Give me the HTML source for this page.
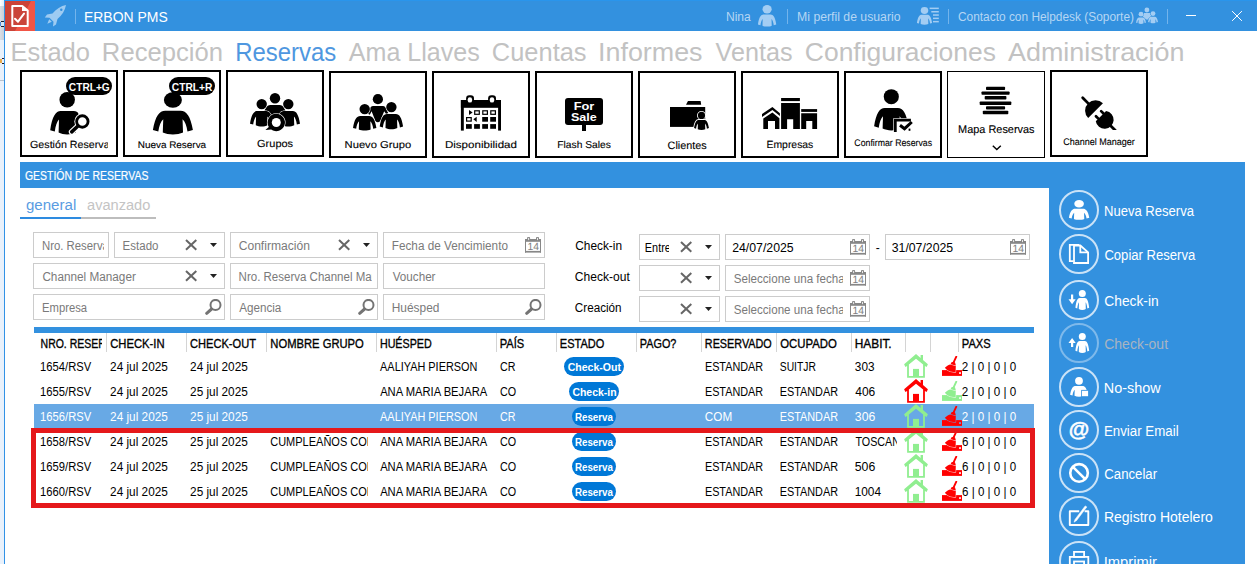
<!DOCTYPE html>
<html lang="es"><head><meta charset="utf-8"><title>ERBON PMS</title>
<style>
html,body{margin:0;padding:0;background:#fff;}
body{width:1257px;height:564px;overflow:hidden;position:relative;font-family:"Liberation Sans", sans-serif;}
#app{position:absolute;left:0;top:0;width:1257px;height:564px;overflow:hidden;background:#fff;}
.a{position:absolute;box-sizing:border-box;display:block;}
.t{position:absolute;white-space:nowrap;display:block;transform-origin:0 0;}
.c{overflow:hidden;}
</style></head><body><div id="app">
<div class="a" style="left:0px;top:0px;width:4px;height:564px;background:#e9f1fb;"></div>
<div class="a" style="left:0px;top:0px;width:4px;height:6px;background:linear-gradient(90deg,#fff,#e3eefb);"></div>
<div class="a" style="left:0px;top:6px;width:4px;height:34px;background:linear-gradient(90deg,#d9dee5,#c6cfda);"></div>
<div class="a" style="left:0.5px;top:21px;width:3.5px;height:1.2px;background:#1c1c2a;"></div>
<div class="a" style="left:0.5px;top:26px;width:3.5px;height:1.2px;background:#1c1c2a;"></div>
<div class="a" style="left:0px;top:22.2px;width:1.2px;height:3.8px;background:#4a86d8;"></div>
<div class="a" style="left:1.2px;top:22.2px;width:2.8px;height:3.8px;background:#d7e6f3;"></div>
<div class="a" style="left:1.5px;top:58px;width:2.5px;height:1.1px;background:#2a1c30;"></div>
<div class="a" style="left:0.3px;top:59px;width:1.3px;height:4px;background:#e8a94a;"></div>
<div class="a" style="left:1.6px;top:63px;width:2.4px;height:1.1px;background:#15151f;"></div>
<div class="a" style="left:0px;top:80px;width:4px;height:1px;background:#b7c1cd;"></div>
<div class="a" style="left:4px;top:0px;width:1px;height:564px;background:#3192e6;"></div>
<div class="a" style="left:5px;top:0px;width:1252px;height:31px;background:#3391df;"></div>
<div class="a" style="left:4px;top:0px;width:1253px;height:1px;background:#2a95ec;"></div>
<svg class="a" style="left:5px;top:1px;" width="30" height="30" viewBox="0 0 30 30"><rect width="30" height="30" fill="#f15546"/><path d="M0 0H26L10 30H0Z" fill="#cc4338"/>
<path d="M7.3 5H17.3L22.7 9.6V25H7.3Z" fill="#ca4439" stroke="#fff" stroke-width="2" stroke-linejoin="round"/>
<path d="M17 5V10H23Z" fill="#fff"/>
<path d="M10 17.7L13 20.7L19 12.6" fill="none" stroke="#fff" stroke-width="2" stroke-linecap="round" stroke-linejoin="round"/></svg>
<svg class="a" style="left:44px;top:4px;" width="23" height="24" viewBox="0 0 23 24"><g fill="#9ecbf2"><path d="M22 1C17 2 12 5 8.5 9.5L3 10.5L0.8 13.5L5.5 13.8L9.5 17.8L9 22.5L12 20.5L13.5 15C18 11.5 21 6.5 22 1Z"/><path d="M5.2 15.2L7.8 17.8L3.3 19.8Z"/></g><circle cx="17.3" cy="5.8" r="1.2" fill="#3391df"/></svg>
<div class="a" style="left:75px;top:9px;width:1px;height:15px;background:#73b4ec;"></div>
<span class="t" style="left:83px;top:10px;font-size:14.6px;line-height:15px;transform:translateX(0.96px) scaleX(0.9561);color:#fff;">ERBON PMS</span>
<span class="t" style="left:725px;top:11px;font-size:12px;line-height:12px;transform:translateX(0.92px) scaleX(1.0049);color:#b5d6f4;">Nina</span>
<div class="a" style="left:787px;top:9px;width:1px;height:15px;background:#73b4ec;"></div>
<span class="t" style="left:797px;top:11px;font-size:12px;line-height:12px;transform:translateX(0.10px) scaleX(1.0197);color:#b5d6f4;">Mi perfil de usuario</span>
<div class="a" style="left:948px;top:9px;width:1px;height:15px;background:#73b4ec;"></div>
<span class="t" style="left:957px;top:11px;font-size:12px;line-height:12px;transform:translateX(0.92px) scaleX(0.9922);color:#b5d6f4;">Contacto con Helpdesk (Soporte)</span>
<div class="a" style="left:1167px;top:9px;width:1px;height:15px;background:#73b4ec;"></div>
<svg class="a" style="left:756px;top:4px" width="22" height="24" viewBox="756 4 22 24"><g fill="#a3cdf3"><ellipse cx="767.10" cy="9.20" rx="4.60" ry="4.20"/><path d="M763.60 14.60L770.60 14.60C773.29 14.60 775.17 17.33 776.25 24.42L773.77 25.13C773.40 22.19 772.64 20.17 771.51 18.95L771.73 25.64C769.25 26.90 764.95 26.90 762.47 25.64L762.69 18.95C761.56 20.17 760.80 22.19 760.43 25.13L757.95 24.42C759.03 17.33 760.91 14.60 763.60 14.60Z"/></g></svg>
<svg class="a" style="left:915px;top:5px" width="26" height="22" viewBox="915 5 26 22"><g fill="#a3cdf3"><ellipse cx="924.50" cy="10.45" rx="3.75" ry="3.45"/><path d="M921.59 14.70L927.41 14.70C929.64 14.70 931.21 16.99 932.10 22.91L930.04 23.50C929.73 21.05 929.10 19.36 928.17 18.34L928.34 23.93C926.29 24.98 922.71 24.98 920.66 23.93L920.83 18.34C919.90 19.36 919.27 21.05 918.96 23.50L916.90 22.91C917.79 16.99 919.36 14.70 921.59 14.70Z"/><rect x="929.6" y="7.6" width="9.2" height="1.5"/><rect x="931.3" y="11" width="7.5" height="1.5"/><rect x="933" y="14.3" width="5.8" height="1.5"/><rect x="933" y="17.6" width="5.8" height="1.5"/><rect x="933" y="20.9" width="5.8" height="1.5"/></g></svg>
<svg class="a" style="left:1134px;top:6px" width="26" height="20" viewBox="1134 6 26 20"><g fill="#a3cdf3"><circle cx="1146.9" cy="10" r="2.4"/><path d="M1144 13H1149.8L1151.5 16L1147.9 19.6H1145.9L1142.3 16Z"/></g><g fill="#a3cdf3" stroke="#3391df" stroke-width="0.9" paint-order="stroke"><ellipse cx="1141.00" cy="14.20" rx="2.40" ry="2.40"/><path d="M1139.11 17.40L1142.89 17.40C1144.35 17.40 1145.37 18.88 1145.95 22.71L1144.61 23.10C1144.41 21.51 1144.00 20.41 1143.39 19.76L1143.50 23.37C1142.16 24.05 1139.84 24.05 1138.50 23.37L1138.61 19.76C1138.00 20.41 1137.59 21.51 1137.39 23.10L1136.05 22.71C1136.63 18.88 1137.65 17.40 1139.11 17.40Z"/><ellipse cx="1153.00" cy="13.60" rx="2.40" ry="2.40"/><path d="M1151.11 16.80L1154.89 16.80C1156.35 16.80 1157.37 18.28 1157.95 22.11L1156.61 22.50C1156.41 20.91 1156.00 19.81 1155.39 19.16L1155.50 22.77C1154.16 23.45 1151.84 23.45 1150.50 22.77L1150.61 19.16C1150.00 19.81 1149.59 20.91 1149.39 22.50L1148.05 22.11C1148.63 18.28 1149.65 16.80 1151.11 16.80Z"/></g></svg>
<div class="a" style="left:1186px;top:15px;width:10px;height:1px;background:#fff;"></div>
<svg class="a" style="left:1231px;top:10px;" width="12" height="12" viewBox="0 0 12 12"><path d="M1.1 1.1L10.9 10.9M10.9 1.1L1.1 10.9" stroke="#fff" stroke-width="1" fill="none"/></svg>
<span class="t" style="left:10px;top:39px;font-size:25.5px;line-height:26px;transform:translateX(0.58px);color:#c2c2c2;">Estado</span>
<span class="t" style="left:101px;top:39px;font-size:25.5px;line-height:26px;transform:translateX(0.85px) scaleX(1.0062);color:#c2c2c2;">Recepción</span>
<span class="t" style="left:235px;top:39px;font-size:25.5px;line-height:26px;transform:translateX(0.26px) scaleX(0.9379);color:#4f97e0;">Reservas</span>
<span class="t" style="left:348px;top:39px;font-size:25.5px;line-height:26px;transform:translateX(0.77px) scaleX(0.9834);color:#c2c2c2;">Ama Llaves</span>
<span class="t" style="left:491px;top:39px;font-size:25.5px;line-height:26px;transform:translateX(0.84px) scaleX(0.9974);color:#c2c2c2;">Cuentas</span>
<span class="t" style="left:598px;top:39px;font-size:25.5px;line-height:26px;transform:translateX(0.01px) scaleX(1.0539);color:#c2c2c2;">Informes</span>
<span class="t" style="left:715px;top:39px;font-size:25.5px;line-height:26px;transform:translateX(0.58px) scaleX(0.9867);color:#c2c2c2;">Ventas</span>
<span class="t" style="left:804px;top:39px;font-size:25.5px;line-height:26px;transform:translateX(0.84px) scaleX(1.0370);color:#c2c2c2;">Configuraciones</span>
<span class="t" style="left:1007px;top:39px;font-size:25.5px;line-height:26px;transform:translateX(0.99px) scaleX(1.0552);color:#c2c2c2;">Administración</span>
<div class="a" style="left:20px;top:70px;width:98px;height:87px;background:#fff;border:2px solid #000;"></div>
<div class="a" style="left:123px;top:70px;width:98px;height:87px;background:#fff;border:2px solid #000;"></div>
<div class="a" style="left:226px;top:70px;width:98px;height:87px;background:#fff;border:2px solid #000;"></div>
<div class="a" style="left:329px;top:71px;width:98px;height:87px;background:#fff;border:2px solid #000;"></div>
<div class="a" style="left:432px;top:71px;width:98px;height:87px;background:#fff;border:2px solid #000;"></div>
<div class="a" style="left:535px;top:71px;width:98px;height:87px;background:#fff;border:2px solid #000;"></div>
<div class="a" style="left:638px;top:71px;width:98px;height:87px;background:#fff;border:2px solid #000;"></div>
<div class="a" style="left:741px;top:71px;width:98px;height:87px;background:#fff;border:2px solid #000;"></div>
<div class="a" style="left:844px;top:71px;width:98px;height:87px;background:#fff;border:2px solid #000;"></div>
<div class="a" style="left:947px;top:71px;width:98px;height:87px;background:#fff;border:1px solid #000;"></div>
<div class="a" style="left:1050px;top:70px;width:98px;height:87px;background:#fff;border:2px solid #000;"></div>
<svg class="a" style="left:45px;top:88px" width="50" height="50" viewBox="45 88 50 50"><g fill="#000"><ellipse cx="67.20" cy="99.85" rx="7.75" ry="7.75"/><path d="M60.70 111.00L73.70 111.00C78.70 111.00 82.20 116.33 84.20 130.16L79.60 131.54C78.90 125.81 77.50 121.86 75.40 119.49L75.80 132.53C71.20 135.00 63.20 135.00 58.60 132.53L59.00 119.49C56.90 121.86 55.50 125.81 54.80 131.54L50.20 130.16C52.20 116.33 55.70 111.00 60.70 111.00Z"/></g><rect x="78.4" y="110" width="8" height="26" fill="#fff"/><path d="M78.2 125.8L71.7 131.9" stroke="#fff" stroke-width="5.8" stroke-linecap="round" fill="none"/><circle cx="82.35" cy="121.5" r="8" fill="#fff"/><path d="M78.2 125.8L71.7 131.9" stroke="#000" stroke-width="3.5" stroke-linecap="round" fill="none"/><circle cx="82.35" cy="121.5" r="5.72" fill="#fff" stroke="#000" stroke-width="2.85"/></svg>
<div class="a" style="left:66px;top:77px;width:46px;height:18px;background:#000;border-radius:9px;"></div>
<span class="t" style="left:68px;top:82px;font-size:10.5px;line-height:11px;font-weight:700;transform:translateX(0.86px) scaleX(0.9667);color:#fff;">CTRL+G</span>
<svg class="a" style="left:148px;top:88px" width="50" height="50" viewBox="148 88 50 50"><g fill="#000"><ellipse cx="172.90" cy="100.05" rx="9.00" ry="7.75"/><path d="M165.25 110.70L180.55 110.70C186.43 110.70 190.55 116.10 192.90 130.10L187.49 131.50C186.66 125.70 185.02 121.70 182.55 119.30L183.02 132.50C177.61 135.00 168.19 135.00 162.78 132.50L163.25 119.30C160.78 121.70 159.14 125.70 158.31 131.50L152.90 130.10C155.25 116.10 159.37 110.70 165.25 110.70Z"/></g></svg>
<div class="a" style="left:169px;top:77px;width:46px;height:18px;background:#000;border-radius:9px;"></div>
<span class="t" style="left:171px;top:82px;font-size:10.5px;line-height:11px;font-weight:700;transform:translateX(0.84px) scaleX(0.9744);color:#fff;">CTRL+R</span>
<svg class="a" style="left:245px;top:90px" width="60" height="45" viewBox="245 90 60 45"><g fill="#000"><ellipse cx="275.00" cy="98.20" rx="5.20" ry="5.20"/><path d="M270.32 105.10L279.68 105.10C283.29 105.10 285.81 108.91 287.25 118.78L283.94 119.77C283.43 115.68 282.42 112.86 280.91 111.17L281.20 120.48C277.88 122.24 272.12 122.24 268.80 120.48L269.09 111.17C267.58 112.86 266.57 115.68 266.06 119.77L262.75 118.78C264.19 108.91 266.71 105.10 270.32 105.10Z"/></g><g fill="#000" stroke="#fff" stroke-width="1.2" paint-order="stroke"><ellipse cx="261.70" cy="104.10" rx="5.20" ry="5.20"/><path d="M257.23 111.00L266.17 111.00C269.61 111.00 272.02 114.52 273.40 123.64L270.23 124.55C269.75 120.77 268.79 118.17 267.34 116.60L267.62 125.20C264.45 126.83 258.95 126.83 255.78 125.20L256.06 116.60C254.61 118.17 253.65 120.77 253.17 124.55L250.00 123.64C251.38 114.52 253.79 111.00 257.23 111.00Z"/><ellipse cx="288.30" cy="104.10" rx="5.20" ry="5.20"/><path d="M283.83 111.00L292.77 111.00C296.21 111.00 298.62 114.52 300.00 123.64L296.83 124.55C296.35 120.77 295.39 118.17 293.94 116.60L294.22 125.20C291.05 126.83 285.55 126.83 282.38 125.20L282.66 116.60C281.21 118.17 280.25 120.77 279.77 124.55L276.60 123.64C277.98 114.52 280.39 111.00 283.83 111.00Z"/><path d="M276.3 113.8A8.7 8.7 0 1 1 271.2 129.6L265.4 129.9L268.8 126.9A8.7 8.7 0 0 1 276.3 113.8Z"/></g><circle cx="276.3" cy="122.5" r="4.5" fill="#fff"/></svg>
<svg class="a" style="left:348px;top:90px" width="60" height="45" viewBox="348 90 60 45"><g fill="#000"><circle cx="377.9" cy="99.2" r="5.1"/><path d="M373 106.1H383C384.6 106.1 385.4 107 386 108.5L388.3 113.2L386.3 114.3L384.2 111.2L380.2 121C378.8 122.6 376.8 122.6 375.4 121L371.6 111.2L369.8 114.8L367.9 113.8L370 108.5C370.6 107 371.4 106.1 373 106.1Z"/></g><g fill="#000" stroke="#fff" stroke-width="1.2" paint-order="stroke"><ellipse cx="364.70" cy="109.10" rx="5.20" ry="5.20"/><path d="M360.23 116.00L369.17 116.00C372.61 116.00 375.02 119.32 376.40 127.91L373.23 128.77C372.75 125.21 371.79 122.76 370.34 121.28L370.62 129.39C367.45 130.92 361.95 130.92 358.78 129.39L359.06 121.28C357.61 122.76 356.65 125.21 356.17 128.77L353.00 127.91C354.38 119.32 356.79 116.00 360.23 116.00Z"/><ellipse cx="391.40" cy="107.10" rx="5.20" ry="5.20"/><path d="M386.93 114.00L395.87 114.00C399.31 114.00 401.72 117.50 403.10 126.56L399.93 127.46C399.45 123.71 398.49 121.12 397.04 119.57L397.32 128.11C394.15 129.73 388.65 129.73 385.48 128.11L385.76 119.57C384.31 121.12 383.35 123.71 382.87 127.46L379.70 126.56C381.08 117.50 383.49 114.00 386.93 114.00Z"/></g></svg>
<svg class="a" style="left:456px;top:93px" width="50" height="40" viewBox="456 93 50 40"><g fill="#000"><rect x="460.9" y="100" width="40.1" height="7.8"/><rect x="460.9" y="100" width="2.9" height="30.6"/><rect x="498.1" y="100" width="2.9" height="30.6"/><rect x="466.1" y="95.2" width="7.9" height="8.4" rx="3.2"/><rect x="488.1" y="95.2" width="7.9" height="8.4" rx="3.2"/><path d="M469 110.0L472.6 112.55L469 115.10000000000001Z"/><rect x="474.70000000000005" y="110.8" width="4.6" height="3.5" fill="#fff" stroke="#000" stroke-width="1.2"/><rect x="482.8" y="110.8" width="4.6" height="3.5" fill="#fff" stroke="#000" stroke-width="1.2"/><rect x="490.8" y="110.8" width="4.6" height="3.5" fill="#fff" stroke="#000" stroke-width="1.2"/><rect x="466.6" y="117.6" width="4.6" height="3.5" fill="#fff" stroke="#000" stroke-width="1.2"/><path d="M476.70000000000005 116.8L473.3 119.35L476.70000000000005 121.9Z"/><rect x="482.2" y="117.0" width="5.8" height="4.7"/><rect x="490.2" y="117.0" width="5.8" height="4.7"/><rect x="466" y="124.1" width="5.8" height="4.7"/><rect x="474.1" y="124.1" width="5.8" height="4.7"/><rect x="482.2" y="124.1" width="5.8" height="4.7"/><rect x="490.2" y="124.1" width="5.8" height="4.7"/></g><rect x="467.7" y="97.2" width="4.4" height="5.4" rx="2.2" fill="#fff"/><rect x="489.8" y="97.2" width="4.4" height="5.4" rx="2.2" fill="#fff"/></svg>
<div class="a" style="left:565px;top:98px;width:38px;height:26.7px;background:#000;border-radius:3px;"></div>
<div class="a" style="left:582.3px;top:124px;width:3.6px;height:6.8px;background:#000;"></div>
<span class="t" style="left:573px;top:100px;font-size:11.5px;line-height:12px;font-weight:700;transform:translateX(0.64px) scaleX(1.1110);color:#fff;">For</span>
<span class="t" style="left:570px;top:111px;font-size:11.5px;line-height:12px;font-weight:700;transform:translateX(0.92px) scaleX(1.0890);color:#fff;">Sale</span>
<svg class="a" style="left:665px;top:96px" width="50" height="38" viewBox="665 96 50 38"><g fill="#000"><rect x="670" y="107" width="35.2" height="19.9"/><path d="M688 100.9H700.6L701.2 104.8H686Z"/></g><g fill="#000" stroke="#fff" stroke-width="1.8" paint-order="stroke"><circle cx="701.5" cy="115.4" r="3.6"/><path d="M698.65 119.90L704.35 119.90C706.54 119.90 708.07 122.19 708.95 128.11L706.93 128.70C706.63 126.25 706.01 124.56 705.09 123.54L705.27 129.13C703.25 130.18 699.75 130.18 697.73 129.13L697.91 123.54C696.99 124.56 696.37 126.25 696.07 128.70L694.05 128.11C694.93 122.19 696.46 119.90 698.65 119.90Z"/></g></svg>
<svg class="a" style="left:760px;top:96px" width="60" height="36" viewBox="760 96 60 36"><g fill="#000"><rect x="781.1" y="98" width="18.8" height="3.1"/><path d="M781.1 103H799.9V128.9H793.2V119.3H787.1V128.9H781.1Z"/><rect x="801.2" y="109.1" width="15.9" height="2.8"/><path d="M801.2 113.2H817.1V128.9H812.3V121H806.2V128.9H801.2Z"/><path d="M772.4 107.1L779.9 113.2V116L772.4 110L762 116.9V114.1Z"/><path d="M772.4 112.4L779.4 118.2V128.9H775V121H768V128.9H763.3V118.4Z"/></g></svg>
<svg class="a" style="left:870px;top:86px" width="46" height="46" viewBox="870 86 46 46"><g fill="#000"><ellipse cx="891.30" cy="96.70" rx="7.55" ry="7.55"/><path d="M884.72 108.00L897.88 108.00C902.94 108.00 906.48 113.11 908.50 126.35L903.85 127.68C903.14 122.19 901.72 118.41 899.60 116.14L900.00 128.62C895.35 130.99 887.25 130.99 882.60 128.62L883.00 116.14C880.88 118.41 879.46 122.19 878.75 127.68L874.10 126.35C876.12 113.11 879.66 108.00 884.72 108.00Z"/></g><rect x="893.3" y="118.2" width="18" height="14" fill="#fff"/><path d="M895.3 120.2H909.5M895.3 120.2V130.8" stroke="#000" stroke-width="2.8" fill="none" stroke-linecap="square"/><path d="M900 125.2L904.5 128.7L911.8 122" stroke="#000" stroke-width="3" fill="none"/><rect x="908.6" y="128.6" width="1.8" height="2.2" fill="#000"/></svg>
<svg class="a" style="left:976px;top:84px" width="40" height="34" viewBox="976 84 40 34"><rect x="986.0" y="86.70" width="19.1" height="3.4" rx="0.8" fill="#000"/><rect x="981.5" y="91.45" width="28.1" height="3.4" rx="0.8" fill="#000"/><rect x="984.7" y="96.05" width="21.7" height="3.4" rx="0.8" fill="#000"/><rect x="979.7" y="101.55" width="31.6" height="3.4" rx="0.8" fill="#000"/><rect x="986.0" y="106.15" width="19.1" height="3.4" rx="0.8" fill="#000"/><rect x="982.8" y="110.80" width="25.5" height="3.4" rx="0.8" fill="#000"/></svg>
<svg class="a" style="left:1078px;top:94px" width="42" height="35.7" viewBox="1078 94 42 35.7"><g transform="translate(1095.55 110.7) rotate(-45)" fill="#000"><path d="M-10.45 0H10.45A10.45 10.45 0 0 0 -10.45 0Z"/><rect x="-1.4" y="-19.6" width="2.8" height="11" rx="1.4"/><rect x="-5" y="2.9" width="2.7" height="6" rx="1.3"/><rect x="2.3" y="2.9" width="2.7" height="6" rx="1.3"/><path d="M-7.3 7.6H7.3A9 9 0 1 1 -7.3 7.6Z"/><rect x="-1.4" y="20" width="2.8" height="10"/></g></svg>
<div class="a c" style="left:28px;top:134px;width:79.90px;height:23px"><span class="t" style="left:2px;top:6px;font-size:10.4px;line-height:11px;transform:translateX(0.07px) scaleX(1.0273);text-rendering:geometricPrecision;-webkit-text-stroke:0.12px currentColor;color:#000;">Gestión Reservas</span></div>
<span class="t" style="left:137px;top:141px;font-size:9.6px;line-height:10px;transform:translateX(0.71px) scaleX(1.0350);text-rendering:geometricPrecision;-webkit-text-stroke:0.12px currentColor;color:#000;">Nueva Reserva</span>
<span class="t" style="left:257px;top:139px;font-size:10.3px;line-height:11px;transform:translateX(0.09px) scaleX(1.0654);text-rendering:geometricPrecision;-webkit-text-stroke:0.12px currentColor;color:#000;">Grupos</span>
<span class="t" style="left:344px;top:141px;font-size:10px;line-height:10px;transform:translateX(0.56px) scaleX(1.1209);text-rendering:geometricPrecision;-webkit-text-stroke:0.12px currentColor;color:#000;">Nuevo Grupo</span>
<span class="t" style="left:444px;top:141px;font-size:10px;line-height:10px;transform:translateX(0.90px) scaleX(1.1576);text-rendering:geometricPrecision;-webkit-text-stroke:0.12px currentColor;color:#000;">Disponibilidad</span>
<span class="t" style="left:557px;top:141px;font-size:10px;line-height:10px;transform:translateX(0.34px) scaleX(1.0243);text-rendering:geometricPrecision;-webkit-text-stroke:0.12px currentColor;color:#000;">Flash Sales</span>
<span class="t" style="left:667px;top:141px;font-size:10.8px;line-height:11px;transform:translateX(0.58px);text-rendering:geometricPrecision;-webkit-text-stroke:0.12px currentColor;color:#000;">Clientes</span>
<span class="t" style="left:766px;top:140px;font-size:10.4px;line-height:11px;transform:translateX(0.53px);text-rendering:geometricPrecision;-webkit-text-stroke:0.12px currentColor;color:#000;">Empresas</span>
<span class="t" style="left:854px;top:139px;font-size:9.6px;line-height:10px;transform:translateX(0.36px) scaleX(0.9104);text-rendering:geometricPrecision;-webkit-text-stroke:0.12px currentColor;color:#000;">Confirmar Reservas</span>
<span class="t" style="left:958px;top:124px;font-size:11.2px;line-height:12px;transform:translateX(0.11px) scaleX(0.9753);text-rendering:geometricPrecision;-webkit-text-stroke:0.12px currentColor;color:#000;">Mapa Reservas</span>
<span class="t" style="left:1063px;top:138px;font-size:9.6px;line-height:10px;transform:translateX(0.17px) scaleX(0.9397);text-rendering:geometricPrecision;-webkit-text-stroke:0.12px currentColor;color:#000;">Channel Manager</span>
<svg class="a" style="left:991px;top:144px;" width="12" height="8" viewBox="0 0 12 8"><path d="M1.8 1.8L5.8 5.6L9.8 1.8" stroke="#000" stroke-width="1.4" fill="none"/></svg>
<div class="a" style="left:20px;top:162px;width:1225px;height:402px;background:#3391df;"></div>
<div class="a" style="left:20px;top:188px;width:1029px;height:376px;background:#fff;"></div>
<span class="t" style="left:24px;top:170px;font-size:12px;line-height:12px;transform:translateX(0.99px) scaleX(0.8714);-webkit-text-stroke:0.2px currentColor;color:#fff;">GESTIÓN DE RESERVAS</span>
<span class="t" style="left:25px;top:197px;font-size:15.4px;line-height:16px;transform:translateX(0.98px) scaleX(0.9788);color:#5a9ce2;">general</span>
<span class="t" style="left:87px;top:197px;font-size:15.4px;line-height:16px;transform:translateX(0.08px) scaleX(0.9479);color:#c4c4c4;">avanzado</span>
<div class="a" style="left:20px;top:217px;width:61px;height:2px;background:#2e8be0;"></div>
<div class="a" style="left:81px;top:217px;width:75px;height:2px;background:#bdbdbd;"></div>
<div class="a" style="left:33px;top:232px;width:76px;height:26px;background:#fff;border:1px solid #cccccc;"></div>
<div class="a" style="left:114px;top:232px;width:111px;height:26px;background:#fff;border:1px solid #cccccc;"></div>
<div class="a" style="left:230px;top:232px;width:148px;height:26px;background:#fff;border:1px solid #cccccc;"></div>
<div class="a" style="left:383px;top:232px;width:162px;height:26px;background:#fff;border:1px solid #cccccc;"></div>
<div class="a" style="left:33px;top:263px;width:192px;height:26px;background:#fff;border:1px solid #cccccc;"></div>
<div class="a" style="left:230px;top:263px;width:148px;height:26px;background:#fff;border:1px solid #cccccc;"></div>
<div class="a" style="left:383px;top:263px;width:162px;height:26px;background:#fff;border:1px solid #cccccc;"></div>
<div class="a" style="left:33px;top:294px;width:192px;height:26px;background:#fff;border:1px solid #cccccc;"></div>
<div class="a" style="left:230px;top:294px;width:148px;height:26px;background:#fff;border:1px solid #cccccc;"></div>
<div class="a" style="left:383px;top:294px;width:162px;height:26px;background:#fff;border:1px solid #cccccc;"></div>
<div class="a c" style="left:39px;top:234px;width:64.90px;height:24px"><span class="t" style="left:2px;top:6px;font-size:12px;line-height:12px;transform:translateX(0.99px) scaleX(0.9464);color:#7a7a7a;">Nro. Reserva</span></div>
<span class="t" style="left:122px;top:240px;font-size:12px;line-height:12px;transform:translateX(0.62px) scaleX(0.9584);color:#7a7a7a;">Estado</span>
<svg class="a" style="left:184.9px;top:239.4px;" width="12" height="11.5" viewBox="0 0 12 11.5"><path d="M1 1L11.3 10.8M11.3 1L1 10.8" stroke="#666" stroke-width="2" fill="none"/></svg>
<svg class="a" style="left:210px;top:243px;" width="7" height="4" viewBox="0 0 7 4"><path d="M0 0H7L3.5 4Z" fill="#222"/></svg>
<span class="t" style="left:238px;top:240px;font-size:12px;line-height:12px;transform:translateX(0.68px) scaleX(1.0078);color:#7a7a7a;">Confirmación</span>
<svg class="a" style="left:338.3px;top:239.4px;" width="12" height="11.5" viewBox="0 0 12 11.5"><path d="M1 1L11.3 10.8M11.3 1L1 10.8" stroke="#666" stroke-width="2" fill="none"/></svg>
<svg class="a" style="left:363px;top:243px;" width="7" height="4" viewBox="0 0 7 4"><path d="M0 0H7L3.5 4Z" fill="#222"/></svg>
<span class="t" style="left:391px;top:240px;font-size:12px;line-height:12px;transform:translateX(0.81px) scaleX(0.9778);color:#7a7a7a;">Fecha de Vencimiento</span>
<svg class="a" style="left:525px;top:237px;" width="16" height="16" viewBox="0 0 16 16"><g fill="#878787"><rect x="0" y="2" width="16" height="2.8"/><rect x="0" y="2" width="1" height="13.6"/><rect x="15" y="2" width="1" height="13.6"/><rect x="0" y="13.9" width="16" height="1.7"/>
<rect x="2.1" y="0" width="3" height="3.6" rx="0.9"/><rect x="11" y="0" width="3" height="3.6" rx="0.9"/></g><rect x="3.1" y="0.9" width="1" height="2.2" fill="#e9e9e9"/><rect x="12" y="0.9" width="1" height="2.2" fill="#e9e9e9"/>
<text x="8.3" y="13.3" font-family="Liberation Sans, sans-serif" font-size="10.4" text-anchor="middle" fill="#7f7f7f" text-rendering="geometricPrecision">14</text></svg>
<span class="t" style="left:42px;top:271px;font-size:12px;line-height:12px;transform:translateX(0.38px) scaleX(0.9797);color:#7a7a7a;">Channel Manager</span>
<svg class="a" style="left:184.9px;top:270.4px;" width="12" height="11.5" viewBox="0 0 12 11.5"><path d="M1 1L11.3 10.8M11.3 1L1 10.8" stroke="#666" stroke-width="2" fill="none"/></svg>
<svg class="a" style="left:210px;top:274px;" width="7" height="4" viewBox="0 0 7 4"><path d="M0 0H7L3.5 4Z" fill="#222"/></svg>
<div class="a c" style="left:236px;top:265px;width:136.00px;height:24px"><span class="t" style="left:2px;top:6px;font-size:12px;line-height:12px;transform:translateX(0.60px) scaleX(0.9589);color:#7a7a7a;">Nro. Reserva Channel Manager</span></div>
<span class="t" style="left:392px;top:271px;font-size:12px;line-height:12px;transform:translateX(0.71px) scaleX(0.9718);color:#7a7a7a;">Voucher</span>
<span class="t" style="left:42px;top:302px;font-size:12px;line-height:12px;transform:translateX(0.06px) scaleX(0.9381);color:#7a7a7a;">Empresa</span>
<svg class="a" style="left:204.5px;top:299px;" width="17" height="16" viewBox="0 0 17 16"><circle cx="10.5" cy="5.9" r="5" fill="none" stroke="#747474" stroke-width="2"/><path d="M6.6 10L1.7 14.3" stroke="#747474" stroke-width="3" stroke-linecap="round"/></svg>
<span class="t" style="left:239px;top:302px;font-size:12px;line-height:12px;transform:translateX(0.25px) scaleX(0.9704);color:#7a7a7a;">Agencia</span>
<svg class="a" style="left:357.5px;top:299px;" width="17" height="16" viewBox="0 0 17 16"><circle cx="10.5" cy="5.9" r="5" fill="none" stroke="#747474" stroke-width="2"/><path d="M6.6 10L1.7 14.3" stroke="#747474" stroke-width="3" stroke-linecap="round"/></svg>
<span class="t" style="left:391px;top:302px;font-size:12px;line-height:12px;transform:translateX(0.76px) scaleX(0.9914);color:#7a7a7a;">Huésped</span>
<svg class="a" style="left:524.5px;top:299px;" width="17" height="16" viewBox="0 0 17 16"><circle cx="10.5" cy="5.9" r="5" fill="none" stroke="#747474" stroke-width="2"/><path d="M6.6 10L1.7 14.3" stroke="#747474" stroke-width="3" stroke-linecap="round"/></svg>
<span class="t" style="left:575px;top:240px;font-size:12px;line-height:12px;transform:translateX(0.23px) scaleX(0.9891);color:#000;">Check-in</span>
<span class="t" style="left:574px;top:271px;font-size:12px;line-height:12px;transform:translateX(0.84px) scaleX(1.0048);color:#000;">Check-out</span>
<span class="t" style="left:574px;top:302px;font-size:12px;line-height:12px;transform:translateX(0.85px) scaleX(0.9722);color:#000;">Creación</span>
<div class="a" style="left:639px;top:234px;width:81px;height:26px;background:#fff;border:1px solid #cccccc;"></div>
<svg class="a" style="left:679.8px;top:241.4px;" width="12" height="11.5" viewBox="0 0 12 11.5"><path d="M1 1L11.3 10.8M11.3 1L1 10.8" stroke="#666" stroke-width="2" fill="none"/></svg>
<svg class="a" style="left:705px;top:245px;" width="7" height="4" viewBox="0 0 7 4"><path d="M0 0H7L3.5 4Z" fill="#222"/></svg>
<div class="a" style="left:725px;top:234px;width:145px;height:26px;background:#fff;border:1px solid #cccccc;"></div>
<svg class="a" style="left:850px;top:239px;" width="16" height="16" viewBox="0 0 16 16"><g fill="#878787"><rect x="0" y="2" width="16" height="2.8"/><rect x="0" y="2" width="1" height="13.6"/><rect x="15" y="2" width="1" height="13.6"/><rect x="0" y="13.9" width="16" height="1.7"/>
<rect x="2.1" y="0" width="3" height="3.6" rx="0.9"/><rect x="11" y="0" width="3" height="3.6" rx="0.9"/></g><rect x="3.1" y="0.9" width="1" height="2.2" fill="#e9e9e9"/><rect x="12" y="0.9" width="1" height="2.2" fill="#e9e9e9"/>
<text x="8.3" y="13.3" font-family="Liberation Sans, sans-serif" font-size="10.4" text-anchor="middle" fill="#7f7f7f" text-rendering="geometricPrecision">14</text></svg>
<div class="a" style="left:639px;top:265px;width:81px;height:26px;background:#fff;border:1px solid #cccccc;"></div>
<svg class="a" style="left:679.8px;top:272.4px;" width="12" height="11.5" viewBox="0 0 12 11.5"><path d="M1 1L11.3 10.8M11.3 1L1 10.8" stroke="#666" stroke-width="2" fill="none"/></svg>
<svg class="a" style="left:705px;top:276px;" width="7" height="4" viewBox="0 0 7 4"><path d="M0 0H7L3.5 4Z" fill="#222"/></svg>
<div class="a" style="left:725px;top:265px;width:145px;height:26px;background:#fff;border:1px solid #cccccc;"></div>
<svg class="a" style="left:850px;top:270px;" width="16" height="16" viewBox="0 0 16 16"><g fill="#878787"><rect x="0" y="2" width="16" height="2.8"/><rect x="0" y="2" width="1" height="13.6"/><rect x="15" y="2" width="1" height="13.6"/><rect x="0" y="13.9" width="16" height="1.7"/>
<rect x="2.1" y="0" width="3" height="3.6" rx="0.9"/><rect x="11" y="0" width="3" height="3.6" rx="0.9"/></g><rect x="3.1" y="0.9" width="1" height="2.2" fill="#e9e9e9"/><rect x="12" y="0.9" width="1" height="2.2" fill="#e9e9e9"/>
<text x="8.3" y="13.3" font-family="Liberation Sans, sans-serif" font-size="10.4" text-anchor="middle" fill="#7f7f7f" text-rendering="geometricPrecision">14</text></svg>
<div class="a" style="left:639px;top:296px;width:81px;height:26px;background:#fff;border:1px solid #cccccc;"></div>
<svg class="a" style="left:679.8px;top:303.4px;" width="12" height="11.5" viewBox="0 0 12 11.5"><path d="M1 1L11.3 10.8M11.3 1L1 10.8" stroke="#666" stroke-width="2" fill="none"/></svg>
<svg class="a" style="left:705px;top:307px;" width="7" height="4" viewBox="0 0 7 4"><path d="M0 0H7L3.5 4Z" fill="#222"/></svg>
<div class="a" style="left:725px;top:296px;width:145px;height:26px;background:#fff;border:1px solid #cccccc;"></div>
<svg class="a" style="left:850px;top:301px;" width="16" height="16" viewBox="0 0 16 16"><g fill="#878787"><rect x="0" y="2" width="16" height="2.8"/><rect x="0" y="2" width="1" height="13.6"/><rect x="15" y="2" width="1" height="13.6"/><rect x="0" y="13.9" width="16" height="1.7"/>
<rect x="2.1" y="0" width="3" height="3.6" rx="0.9"/><rect x="11" y="0" width="3" height="3.6" rx="0.9"/></g><rect x="3.1" y="0.9" width="1" height="2.2" fill="#e9e9e9"/><rect x="12" y="0.9" width="1" height="2.2" fill="#e9e9e9"/>
<text x="8.3" y="13.3" font-family="Liberation Sans, sans-serif" font-size="10.4" text-anchor="middle" fill="#7f7f7f" text-rendering="geometricPrecision">14</text></svg>
<div class="a" style="left:885px;top:234px;width:145px;height:26px;background:#fff;border:1px solid #cccccc;"></div>
<svg class="a" style="left:1010px;top:239px;" width="16" height="16" viewBox="0 0 16 16"><g fill="#878787"><rect x="0" y="2" width="16" height="2.8"/><rect x="0" y="2" width="1" height="13.6"/><rect x="15" y="2" width="1" height="13.6"/><rect x="0" y="13.9" width="16" height="1.7"/>
<rect x="2.1" y="0" width="3" height="3.6" rx="0.9"/><rect x="11" y="0" width="3" height="3.6" rx="0.9"/></g><rect x="3.1" y="0.9" width="1" height="2.2" fill="#e9e9e9"/><rect x="12" y="0.9" width="1" height="2.2" fill="#e9e9e9"/>
<text x="8.3" y="13.3" font-family="Liberation Sans, sans-serif" font-size="10.4" text-anchor="middle" fill="#7f7f7f" text-rendering="geometricPrecision">14</text></svg>
<div class="a c" style="left:642px;top:236px;width:27.40px;height:24px"><span class="t" style="left:2px;top:6px;font-size:12px;line-height:12px;transform:translateX(0.87px) scaleX(0.9060);color:#000;">Entre</span></div>
<span class="t" style="left:732px;top:242px;font-size:12px;line-height:12px;transform:translateX(0.18px) scaleX(1.0242);color:#000;">24/07/2025</span>
<span class="t" style="left:875px;top:242px;font-size:12px;line-height:12px;transform:translateX(0.65px);color:#000;">-</span>
<span class="t" style="left:891px;top:242px;font-size:12px;line-height:12px;transform:translateX(0.73px) scaleX(1.0227);color:#000;">31/07/2025</span>
<div class="a c" style="left:731px;top:267px;width:112.00px;height:24px"><span class="t" style="left:2px;top:6px;font-size:12px;line-height:12px;transform:translateX(0.78px) scaleX(0.9671);color:#7a7a7a;">Seleccione una fecha</span></div>
<div class="a c" style="left:731px;top:298px;width:112.00px;height:24px"><span class="t" style="left:2px;top:6px;font-size:12px;line-height:12px;transform:translateX(0.78px) scaleX(0.9671);color:#7a7a7a;">Seleccione una fecha</span></div>
<div class="a" style="left:34px;top:327px;width:1000px;height:6px;background:#3391df;"></div>
<div class="a" style="left:106px;top:333px;width:1px;height:19px;background:#d4d4d4;"></div>
<div class="a" style="left:186px;top:333px;width:1px;height:19px;background:#d4d4d4;"></div>
<div class="a" style="left:266px;top:333px;width:1px;height:19px;background:#d4d4d4;"></div>
<div class="a" style="left:376px;top:333px;width:1px;height:19px;background:#d4d4d4;"></div>
<div class="a" style="left:496px;top:333px;width:1px;height:19px;background:#d4d4d4;"></div>
<div class="a" style="left:556px;top:333px;width:1px;height:19px;background:#d4d4d4;"></div>
<div class="a" style="left:636px;top:333px;width:1px;height:19px;background:#d4d4d4;"></div>
<div class="a" style="left:701px;top:333px;width:1px;height:19px;background:#d4d4d4;"></div>
<div class="a" style="left:776px;top:333px;width:1px;height:19px;background:#d4d4d4;"></div>
<div class="a" style="left:851px;top:333px;width:1px;height:19px;background:#d4d4d4;"></div>
<div class="a" style="left:905px;top:333px;width:1px;height:19px;background:#d4d4d4;"></div>
<div class="a" style="left:930px;top:333px;width:1px;height:19px;background:#d4d4d4;"></div>
<div class="a" style="left:958px;top:333px;width:1px;height:19px;background:#d4d4d4;"></div>
<div class="a c" style="left:38px;top:332px;width:64.00px;height:24px"><span class="t" style="left:2px;top:6px;font-size:12px;line-height:12px;transform:translateX(0.55px) scaleX(0.8744);-webkit-text-stroke:0.32px currentColor;color:#000;">NRO. RESERVA</span></div>
<span class="t" style="left:110px;top:338px;font-size:12px;line-height:12px;transform:translateX(0.13px) scaleX(0.9384);-webkit-text-stroke:0.32px currentColor;color:#000;">CHECK-IN</span>
<span class="t" style="left:190px;top:338px;font-size:12px;line-height:12px;transform:translateX(0.10px) scaleX(0.9226);-webkit-text-stroke:0.32px currentColor;color:#000;">CHECK-OUT</span>
<span class="t" style="left:270px;top:338px;font-size:12px;line-height:12px;transform:translateX(0.30px) scaleX(0.9352);-webkit-text-stroke:0.32px currentColor;color:#000;">NOMBRE GRUPO</span>
<span class="t" style="left:379px;top:338px;font-size:12px;line-height:12px;transform:translateX(0.90px) scaleX(0.8927);-webkit-text-stroke:0.32px currentColor;color:#000;">HUÉSPED</span>
<span class="t" style="left:499px;top:338px;font-size:12px;line-height:12px;transform:translateX(0.79px) scaleX(0.9252);-webkit-text-stroke:0.32px currentColor;color:#000;">PAÍS</span>
<span class="t" style="left:559px;top:338px;font-size:12px;line-height:12px;transform:translateX(0.84px) scaleX(0.9173);-webkit-text-stroke:0.32px currentColor;color:#000;">ESTADO</span>
<span class="t" style="left:639px;top:338px;font-size:12px;line-height:12px;transform:translateX(0.87px) scaleX(0.9025);-webkit-text-stroke:0.32px currentColor;color:#000;">PAGO?</span>
<span class="t" style="left:704px;top:338px;font-size:12px;line-height:12px;transform:translateX(0.87px) scaleX(0.8999);-webkit-text-stroke:0.32px currentColor;color:#000;">RESERVADO</span>
<span class="t" style="left:780px;top:338px;font-size:12px;line-height:12px;transform:translateX(0.16px) scaleX(0.9473);-webkit-text-stroke:0.32px currentColor;color:#000;">OCUPADO</span>
<span class="t" style="left:854px;top:338px;font-size:12px;line-height:12px;transform:translateX(0.70px) scaleX(0.9901);-webkit-text-stroke:0.32px currentColor;color:#000;">HABIT.</span>
<span class="t" style="left:961px;top:338px;font-size:12px;line-height:12px;transform:translateX(0.82px) scaleX(0.9282);-webkit-text-stroke:0.32px currentColor;color:#000;">PAXS</span>
<div class="a" style="left:34px;top:404px;width:1000px;height:25px;background:#68a9e5;"></div>
<span class="t" style="left:40px;top:361px;font-size:12px;line-height:12px;transform:translateX(0.10px) scaleX(0.9337);color:#000;">1654/RSV</span>
<span class="t" style="left:110px;top:361px;font-size:12px;line-height:12px;transform:translateX(0.09px) scaleX(0.9836);color:#000;">24 jul 2025</span>
<span class="t" style="left:190px;top:361px;font-size:12px;line-height:12px;transform:translateX(0.07px) scaleX(0.9831);color:#000;">24 jul 2025</span>
<span class="t" style="left:380px;top:361px;font-size:12px;line-height:12px;transform:translateX(0.09px) scaleX(0.9083);color:#000;">AALIYAH PIERSON</span>
<span class="t" style="left:500px;top:361px;font-size:12px;line-height:12px;transform:translateX(0.02px) scaleX(0.8914);color:#000;">CR</span>
<div class="a" style="left:564px;top:357px;width:60px;height:19px;background:#0078d7;border-radius:10px;"></div>
<span class="t" style="left:567px;top:361px;font-size:11.5px;line-height:12px;font-weight:700;transform:translateX(0.63px) scaleX(0.9167);color:#fff;">Check-Out</span>
<span class="t" style="left:704px;top:361px;font-size:12px;line-height:12px;transform:translateX(0.89px) scaleX(0.9045);color:#000;">ESTANDAR</span>
<span class="t" style="left:779px;top:361px;font-size:12px;line-height:12px;transform:translateX(0.77px) scaleX(0.8591);color:#000;">SUITJR</span>
<span class="t" style="left:854px;top:361px;font-size:12px;line-height:12px;transform:translateX(0.84px) scaleX(0.9824);color:#000;">303</span>
<svg class="a" style="left:904px;top:354px;" width="24" height="24" viewBox="0 0 24 24"><g transform="translate(-904 -354)"><path fill-rule="evenodd" fill="#90ee90" d="M916 354.1L920.6 358V354.9H923V360.1L927.9 364.3L926.6 367L924.9 366.1V377.8H907.1V366.1L905.4 367L904.1 364.3ZM916 358.8L908.9 364.6V375.9H923.1V364.6Z"/><rect x="913" y="368.9" width="6" height="7.5" fill="#90ee90"/></g></svg>
<svg class="a" style="left:942px;top:356px;" width="21" height="21" viewBox="0 0 21 21"><g transform="translate(-942 -356)"><rect x="942" y="370.1" width="20" height="5.8" fill="#ff0000"/><rect x="959.1" y="372.2" width="1.8" height="1.7" fill="#fff"/>
<path d="M950 364.5L955.8 366.1L955.6 372.3L950.2 371.5C948 370.6 946.2 369.5 944.9 367.7C946.4 366.2 948.1 365.2 950 364.5Z" fill="#ff0000" stroke="#fff" stroke-width="0.9" paint-order="stroke" stroke-linejoin="round"/>
<path d="M950.5 364.2L951.7 362L955 362.2L955.9 365.5Z" fill="#ff0000"/><path d="M956.3 356.7L953.5 362.6" stroke="#ff0000" stroke-width="1.9" stroke-linecap="round" fill="none"/></g></svg>
<span class="t" style="left:961px;top:361px;font-size:12px;line-height:12px;transform:translateX(0.87px) scaleX(0.9673);color:#000;">2 | 0 | 0 | 0</span>
<span class="t" style="left:40px;top:386px;font-size:12px;line-height:12px;transform:translateX(0.10px) scaleX(0.9337);color:#000;">1655/RSV</span>
<span class="t" style="left:110px;top:386px;font-size:12px;line-height:12px;transform:translateX(0.09px) scaleX(0.9836);color:#000;">24 jul 2025</span>
<span class="t" style="left:190px;top:386px;font-size:12px;line-height:12px;transform:translateX(0.07px) scaleX(0.9831);color:#000;">25 jul 2025</span>
<span class="t" style="left:380px;top:386px;font-size:12px;line-height:12px;transform:translateX(0.13px) scaleX(0.9336);color:#000;">ANA MARIA BEJARA</span>
<span class="t" style="left:499px;top:386px;font-size:12px;line-height:12px;transform:translateX(0.99px) scaleX(0.8978);color:#000;">CO</span>
<div class="a" style="left:569px;top:382px;width:50.299999999999955px;height:19px;background:#0078d7;border-radius:10px;"></div>
<span class="t" style="left:572px;top:386px;font-size:11.5px;line-height:12px;font-weight:700;transform:translateX(0.38px) scaleX(0.9095);color:#fff;">Check-in</span>
<span class="t" style="left:704px;top:386px;font-size:12px;line-height:12px;transform:translateX(0.89px) scaleX(0.9045);color:#000;">ESTANDAR</span>
<span class="t" style="left:779px;top:386px;font-size:12px;line-height:12px;transform:translateX(0.63px) scaleX(0.9055);color:#000;">ESTANDAR</span>
<span class="t" style="left:855px;top:386px;font-size:12px;line-height:12px;transform:translateX(0.25px);color:#000;">406</span>
<svg class="a" style="left:904px;top:379px;" width="24" height="24" viewBox="0 0 24 24"><g transform="translate(-904 -354)"><path fill-rule="evenodd" fill="#ff0000" d="M916 354.1L920.6 358V354.9H923V360.1L927.9 364.3L926.6 367L924.9 366.1V377.8H907.1V366.1L905.4 367L904.1 364.3ZM916 358.8L908.9 364.6V375.9H923.1V364.6Z"/><rect x="913" y="368.9" width="6" height="7.5" fill="#ff0000"/></g></svg>
<svg class="a" style="left:942px;top:381px;" width="21" height="21" viewBox="0 0 21 21"><g transform="translate(-942 -356)"><rect x="942" y="370.1" width="20" height="5.8" fill="#90ee90"/><rect x="959.1" y="372.2" width="1.8" height="1.7" fill="#fff"/>
<path d="M950 364.5L955.8 366.1L955.6 372.3L950.2 371.5C948 370.6 946.2 369.5 944.9 367.7C946.4 366.2 948.1 365.2 950 364.5Z" fill="#90ee90" stroke="#fff" stroke-width="0.9" paint-order="stroke" stroke-linejoin="round"/>
<path d="M950.5 364.2L951.7 362L955 362.2L955.9 365.5Z" fill="#90ee90"/><path d="M956.3 356.7L953.5 362.6" stroke="#90ee90" stroke-width="1.9" stroke-linecap="round" fill="none"/></g></svg>
<span class="t" style="left:961px;top:386px;font-size:12px;line-height:12px;transform:translateX(0.87px) scaleX(0.9673);color:#000;">2 | 0 | 0 | 0</span>
<span class="t" style="left:40px;top:411px;font-size:12px;line-height:12px;transform:translateX(0.10px) scaleX(0.9337);color:#fff;">1656/RSV</span>
<span class="t" style="left:110px;top:411px;font-size:12px;line-height:12px;transform:translateX(0.09px) scaleX(0.9836);color:#fff;">24 jul 2025</span>
<span class="t" style="left:190px;top:411px;font-size:12px;line-height:12px;transform:translateX(0.07px) scaleX(0.9831);color:#fff;">25 jul 2025</span>
<span class="t" style="left:380px;top:411px;font-size:12px;line-height:12px;transform:translateX(0.09px) scaleX(0.9083);color:#fff;">AALIYAH PIERSON</span>
<span class="t" style="left:500px;top:411px;font-size:12px;line-height:12px;transform:translateX(0.02px) scaleX(0.8914);color:#fff;">CR</span>
<div class="a" style="left:572px;top:407px;width:44px;height:19px;background:#0078d7;border-radius:10px;"></div>
<span class="t" style="left:574px;top:411px;font-size:11.5px;line-height:12px;font-weight:700;transform:translateX(0.91px) scaleX(0.8501);color:#fff;">Reserva</span>
<span class="t" style="left:704px;top:411px;font-size:12px;line-height:12px;transform:translateX(0.85px) scaleX(0.9758);color:#fff;">COM</span>
<span class="t" style="left:779px;top:411px;font-size:12px;line-height:12px;transform:translateX(0.63px) scaleX(0.9055);color:#fff;">ESTANDAR</span>
<span class="t" style="left:854px;top:411px;font-size:12px;line-height:12px;transform:translateX(0.79px) scaleX(1.0248);color:#fff;">306</span>
<svg class="a" style="left:904px;top:404px;" width="24" height="24" viewBox="0 0 24 24"><g transform="translate(-904 -354)"><path fill-rule="evenodd" fill="#90ee90" d="M916 354.1L920.6 358V354.9H923V360.1L927.9 364.3L926.6 367L924.9 366.1V377.8H907.1V366.1L905.4 367L904.1 364.3ZM916 358.8L908.9 364.6V375.9H923.1V364.6Z"/><rect x="913" y="368.9" width="6" height="7.5" fill="#90ee90"/></g></svg>
<svg class="a" style="left:942px;top:406px;" width="21" height="21" viewBox="0 0 21 21"><g transform="translate(-942 -356)"><rect x="942" y="370.1" width="20" height="5.8" fill="#ff0000"/><rect x="959.1" y="372.2" width="1.8" height="1.7" fill="#68a9e5"/>
<path d="M950 364.5L955.8 366.1L955.6 372.3L950.2 371.5C948 370.6 946.2 369.5 944.9 367.7C946.4 366.2 948.1 365.2 950 364.5Z" fill="#ff0000" stroke="#68a9e5" stroke-width="0.9" paint-order="stroke" stroke-linejoin="round"/>
<path d="M950.5 364.2L951.7 362L955 362.2L955.9 365.5Z" fill="#ff0000"/><path d="M956.3 356.7L953.5 362.6" stroke="#ff0000" stroke-width="1.9" stroke-linecap="round" fill="none"/></g></svg>
<span class="t" style="left:961px;top:411px;font-size:12px;line-height:12px;transform:translateX(0.87px) scaleX(0.9673);color:#fff;">2 | 0 | 0 | 0</span>
<span class="t" style="left:40px;top:436px;font-size:12px;line-height:12px;transform:translateX(0.10px) scaleX(0.9337);color:#000;">1658/RSV</span>
<span class="t" style="left:110px;top:436px;font-size:12px;line-height:12px;transform:translateX(0.09px) scaleX(0.9836);color:#000;">24 jul 2025</span>
<span class="t" style="left:190px;top:436px;font-size:12px;line-height:12px;transform:translateX(0.07px) scaleX(0.9831);color:#000;">25 jul 2025</span>
<div class="a c" style="left:268px;top:430px;width:99.60px;height:24px"><span class="t" style="left:2px;top:6px;font-size:12px;line-height:12px;transform:translateX(0.24px) scaleX(0.9164);color:#000;">CUMPLEAÑOS CON</span></div>
<span class="t" style="left:380px;top:436px;font-size:12px;line-height:12px;transform:translateX(0.13px) scaleX(0.9336);color:#000;">ANA MARIA BEJARA</span>
<span class="t" style="left:499px;top:436px;font-size:12px;line-height:12px;transform:translateX(0.99px) scaleX(0.8978);color:#000;">CO</span>
<div class="a" style="left:572px;top:432px;width:44px;height:19px;background:#0078d7;border-radius:10px;"></div>
<span class="t" style="left:574px;top:436px;font-size:11.5px;line-height:12px;font-weight:700;transform:translateX(0.91px) scaleX(0.8501);color:#fff;">Reserva</span>
<span class="t" style="left:704px;top:436px;font-size:12px;line-height:12px;transform:translateX(0.89px) scaleX(0.9045);color:#000;">ESTANDAR</span>
<span class="t" style="left:779px;top:436px;font-size:12px;line-height:12px;transform:translateX(0.63px) scaleX(0.9055);color:#000;">ESTANDAR</span>
<div class="a c" style="left:853px;top:430px;width:44.00px;height:24px"><span class="t" style="left:2px;top:6px;font-size:12px;line-height:12px;transform:translateX(0.44px) scaleX(0.8943);color:#000;">TOSCANA</span></div>
<svg class="a" style="left:904px;top:429px;" width="24" height="24" viewBox="0 0 24 24"><g transform="translate(-904 -354)"><path fill-rule="evenodd" fill="#90ee90" d="M916 354.1L920.6 358V354.9H923V360.1L927.9 364.3L926.6 367L924.9 366.1V377.8H907.1V366.1L905.4 367L904.1 364.3ZM916 358.8L908.9 364.6V375.9H923.1V364.6Z"/><rect x="913" y="368.9" width="6" height="7.5" fill="#90ee90"/></g></svg>
<svg class="a" style="left:942px;top:431px;" width="21" height="21" viewBox="0 0 21 21"><g transform="translate(-942 -356)"><rect x="942" y="370.1" width="20" height="5.8" fill="#ff0000"/><rect x="959.1" y="372.2" width="1.8" height="1.7" fill="#fff"/>
<path d="M950 364.5L955.8 366.1L955.6 372.3L950.2 371.5C948 370.6 946.2 369.5 944.9 367.7C946.4 366.2 948.1 365.2 950 364.5Z" fill="#ff0000" stroke="#fff" stroke-width="0.9" paint-order="stroke" stroke-linejoin="round"/>
<path d="M950.5 364.2L951.7 362L955 362.2L955.9 365.5Z" fill="#ff0000"/><path d="M956.3 356.7L953.5 362.6" stroke="#ff0000" stroke-width="1.9" stroke-linecap="round" fill="none"/></g></svg>
<span class="t" style="left:962px;top:436px;font-size:12px;line-height:12px;transform:translateX(0.09px) scaleX(0.9634);color:#000;">6 | 0 | 0 | 0</span>
<span class="t" style="left:40px;top:461px;font-size:12px;line-height:12px;transform:translateX(0.10px) scaleX(0.9337);color:#000;">1659/RSV</span>
<span class="t" style="left:110px;top:461px;font-size:12px;line-height:12px;transform:translateX(0.09px) scaleX(0.9836);color:#000;">24 jul 2025</span>
<span class="t" style="left:190px;top:461px;font-size:12px;line-height:12px;transform:translateX(0.07px) scaleX(0.9831);color:#000;">25 jul 2025</span>
<div class="a c" style="left:268px;top:455px;width:99.60px;height:24px"><span class="t" style="left:2px;top:6px;font-size:12px;line-height:12px;transform:translateX(0.24px) scaleX(0.9164);color:#000;">CUMPLEAÑOS CON</span></div>
<span class="t" style="left:380px;top:461px;font-size:12px;line-height:12px;transform:translateX(0.13px) scaleX(0.9336);color:#000;">ANA MARIA BEJARA</span>
<span class="t" style="left:499px;top:461px;font-size:12px;line-height:12px;transform:translateX(0.99px) scaleX(0.8978);color:#000;">CO</span>
<div class="a" style="left:572px;top:457px;width:44px;height:19px;background:#0078d7;border-radius:10px;"></div>
<span class="t" style="left:574px;top:461px;font-size:11.5px;line-height:12px;font-weight:700;transform:translateX(0.91px) scaleX(0.8501);color:#fff;">Reserva</span>
<span class="t" style="left:704px;top:461px;font-size:12px;line-height:12px;transform:translateX(0.89px) scaleX(0.9045);color:#000;">ESTANDAR</span>
<span class="t" style="left:779px;top:461px;font-size:12px;line-height:12px;transform:translateX(0.63px) scaleX(0.9055);color:#000;">ESTANDAR</span>
<span class="t" style="left:854px;top:461px;font-size:12px;line-height:12px;transform:translateX(0.74px) scaleX(1.0258);color:#000;">506</span>
<svg class="a" style="left:904px;top:454px;" width="24" height="24" viewBox="0 0 24 24"><g transform="translate(-904 -354)"><path fill-rule="evenodd" fill="#90ee90" d="M916 354.1L920.6 358V354.9H923V360.1L927.9 364.3L926.6 367L924.9 366.1V377.8H907.1V366.1L905.4 367L904.1 364.3ZM916 358.8L908.9 364.6V375.9H923.1V364.6Z"/><rect x="913" y="368.9" width="6" height="7.5" fill="#90ee90"/></g></svg>
<svg class="a" style="left:942px;top:456px;" width="21" height="21" viewBox="0 0 21 21"><g transform="translate(-942 -356)"><rect x="942" y="370.1" width="20" height="5.8" fill="#ff0000"/><rect x="959.1" y="372.2" width="1.8" height="1.7" fill="#fff"/>
<path d="M950 364.5L955.8 366.1L955.6 372.3L950.2 371.5C948 370.6 946.2 369.5 944.9 367.7C946.4 366.2 948.1 365.2 950 364.5Z" fill="#ff0000" stroke="#fff" stroke-width="0.9" paint-order="stroke" stroke-linejoin="round"/>
<path d="M950.5 364.2L951.7 362L955 362.2L955.9 365.5Z" fill="#ff0000"/><path d="M956.3 356.7L953.5 362.6" stroke="#ff0000" stroke-width="1.9" stroke-linecap="round" fill="none"/></g></svg>
<span class="t" style="left:962px;top:461px;font-size:12px;line-height:12px;transform:translateX(0.09px) scaleX(0.9634);color:#000;">6 | 0 | 0 | 0</span>
<span class="t" style="left:40px;top:486px;font-size:12px;line-height:12px;transform:translateX(0.10px) scaleX(0.9337);color:#000;">1660/RSV</span>
<span class="t" style="left:110px;top:486px;font-size:12px;line-height:12px;transform:translateX(0.09px) scaleX(0.9836);color:#000;">24 jul 2025</span>
<span class="t" style="left:190px;top:486px;font-size:12px;line-height:12px;transform:translateX(0.07px) scaleX(0.9831);color:#000;">25 jul 2025</span>
<div class="a c" style="left:268px;top:480px;width:99.60px;height:24px"><span class="t" style="left:2px;top:6px;font-size:12px;line-height:12px;transform:translateX(0.24px) scaleX(0.9164);color:#000;">CUMPLEAÑOS CON</span></div>
<span class="t" style="left:380px;top:486px;font-size:12px;line-height:12px;transform:translateX(0.13px) scaleX(0.9336);color:#000;">ANA MARIA BEJARA</span>
<span class="t" style="left:499px;top:486px;font-size:12px;line-height:12px;transform:translateX(0.99px) scaleX(0.8978);color:#000;">CO</span>
<div class="a" style="left:572px;top:482px;width:44px;height:19px;background:#0078d7;border-radius:10px;"></div>
<span class="t" style="left:574px;top:486px;font-size:11.5px;line-height:12px;font-weight:700;transform:translateX(0.91px) scaleX(0.8501);color:#fff;">Reserva</span>
<span class="t" style="left:704px;top:486px;font-size:12px;line-height:12px;transform:translateX(0.89px) scaleX(0.9045);color:#000;">ESTANDAR</span>
<span class="t" style="left:779px;top:486px;font-size:12px;line-height:12px;transform:translateX(0.63px) scaleX(0.9055);color:#000;">ESTANDAR</span>
<span class="t" style="left:854px;top:486px;font-size:12px;line-height:12px;transform:translateX(0.66px) scaleX(0.9888);color:#000;">1004</span>
<svg class="a" style="left:904px;top:479px;" width="24" height="24" viewBox="0 0 24 24"><g transform="translate(-904 -354)"><path fill-rule="evenodd" fill="#90ee90" d="M916 354.1L920.6 358V354.9H923V360.1L927.9 364.3L926.6 367L924.9 366.1V377.8H907.1V366.1L905.4 367L904.1 364.3ZM916 358.8L908.9 364.6V375.9H923.1V364.6Z"/><rect x="913" y="368.9" width="6" height="7.5" fill="#90ee90"/></g></svg>
<svg class="a" style="left:942px;top:481px;" width="21" height="21" viewBox="0 0 21 21"><g transform="translate(-942 -356)"><rect x="942" y="370.1" width="20" height="5.8" fill="#ff0000"/><rect x="959.1" y="372.2" width="1.8" height="1.7" fill="#fff"/>
<path d="M950 364.5L955.8 366.1L955.6 372.3L950.2 371.5C948 370.6 946.2 369.5 944.9 367.7C946.4 366.2 948.1 365.2 950 364.5Z" fill="#ff0000" stroke="#fff" stroke-width="0.9" paint-order="stroke" stroke-linejoin="round"/>
<path d="M950.5 364.2L951.7 362L955 362.2L955.9 365.5Z" fill="#ff0000"/><path d="M956.3 356.7L953.5 362.6" stroke="#ff0000" stroke-width="1.9" stroke-linecap="round" fill="none"/></g></svg>
<span class="t" style="left:962px;top:486px;font-size:12px;line-height:12px;transform:translateX(0.09px) scaleX(0.9634);color:#000;">6 | 0 | 0 | 0</span>
<div class="a" style="left:31px;top:428px;width:1004.3px;height:80px;border:5.2px solid #e5181b;"></div>
<div class="a" style="left:1059px;top:189.9px;width:40px;height:40px;border:2px solid rgba(255,255,255,0.74);border-radius:50%"></div>
<svg class="a" style="left:1060px;top:191px" width="38" height="38" viewBox="1060 191 38 38"><g fill="#fff"><ellipse cx="1079.10" cy="203.70" rx="4.80" ry="3.80"/><path d="M1075.20 208.80L1083.00 208.80C1086.00 208.80 1088.10 211.31 1089.30 217.82L1086.54 218.47C1086.12 215.77 1085.28 213.91 1084.02 212.80L1084.26 218.93C1081.50 220.09 1076.70 220.09 1073.94 218.93L1074.18 212.80C1072.92 213.91 1072.08 215.77 1071.66 218.47L1068.90 217.82C1070.10 211.31 1072.20 208.80 1075.20 208.80Z"/></g></svg>
<span class="t" style="left:1103px;top:204px;font-size:14px;line-height:14px;transform:translateX(0.95px) scaleX(0.9324);color:#fff;">Nueva Reserva</span>
<div class="a" style="left:1059px;top:233.9px;width:40px;height:40px;border:2px solid rgba(255,255,255,0.74);border-radius:50%"></div>
<svg class="a" style="left:1060px;top:235px" width="38" height="38" viewBox="1060 235 38 38"><path d="M1074 245.5H1080.3L1088.1 252.3V263.0H1074Z" fill="none" stroke="#fff" stroke-width="1.8" stroke-linejoin="miter"/><path d="M1080.3 245.5V252.3H1088.1" fill="none" stroke="#fff" stroke-width="1.8"/><path d="M1073.2 261.1H1069.8V244.8H1079.2" fill="none" stroke="#fff" stroke-width="1.8"/></svg>
<span class="t" style="left:1104px;top:248px;font-size:14px;line-height:14px;transform:translateX(0.39px) scaleX(0.9343);color:#fff;">Copiar Reserva</span>
<div class="a" style="left:1059px;top:279.9px;width:40px;height:40px;border:2px solid rgba(255,255,255,0.74);border-radius:50%"></div>
<svg class="a" style="left:1060px;top:281px" width="38" height="38" viewBox="1060 281 38 38"><g fill="#fff"><ellipse cx="1082.30" cy="293.40" rx="3.50" ry="3.50"/><path d="M1079.66 298.00L1084.94 298.00C1086.97 298.00 1088.39 300.73 1089.20 307.82L1087.33 308.53C1087.05 305.59 1086.48 303.57 1085.63 302.35L1085.79 309.04C1083.92 310.30 1080.68 310.30 1078.81 309.04L1078.97 302.35C1078.12 303.57 1077.55 305.59 1077.27 308.53L1075.40 307.82C1076.21 300.73 1077.63 298.00 1079.66 298.00Z"/></g><path d="M1071 294.59999999999997H1073.2V299.29999999999995H1075.7L1072.1 304.29999999999995L1068.5 299.29999999999995H1071Z" fill="#fff"/></svg>
<span class="t" style="left:1104px;top:294px;font-size:14px;line-height:14px;transform:translateX(0.29px) scaleX(0.9844);color:#fff;">Check-in</span>
<div class="a" style="left:1059px;top:322.9px;width:40px;height:40px;border:2px solid rgba(255,255,255,0.37);border-radius:50%"></div>
<svg class="a" style="left:1060px;top:324px" width="38" height="38" viewBox="1060 324 38 38"><g fill="#fff"><ellipse cx="1082.30" cy="336.40" rx="3.50" ry="3.50"/><path d="M1079.66 341.00L1084.94 341.00C1086.97 341.00 1088.39 343.73 1089.20 350.82L1087.33 351.53C1087.05 348.59 1086.48 346.57 1085.63 345.35L1085.79 352.04C1083.92 353.30 1080.68 353.30 1078.81 352.04L1078.97 345.35C1078.12 346.57 1077.55 348.59 1077.27 351.53L1075.40 350.82C1076.21 343.73 1077.63 341.00 1079.66 341.00Z"/></g><path d="M1071 347.09999999999997H1073.2V343.09999999999997H1075.7L1072.1 338.0L1068.5 343.09999999999997H1071Z" fill="#fff"/></svg>
<span class="t" style="left:1104px;top:337px;font-size:14px;line-height:14px;transform:translateX(0.22px);color:#a8b4c2;">Check-out</span>
<div class="a" style="left:1059px;top:366.9px;width:40px;height:40px;border:2px solid rgba(255,255,255,0.74);border-radius:50%"></div>
<svg class="a" style="left:1060px;top:368px" width="38" height="38" viewBox="1060 368 38 38"><g fill="#fff"><ellipse cx="1079.00" cy="380.80" rx="3.90" ry="3.90"/><path d="M1075.60 385.90L1082.40 385.90C1085.02 385.90 1086.85 388.36 1087.90 394.75L1085.49 395.39C1085.13 392.75 1084.39 390.92 1083.29 389.83L1083.50 395.85C1081.09 396.99 1076.91 396.99 1074.50 395.85L1074.71 389.83C1073.61 390.92 1072.87 392.75 1072.51 395.39L1070.10 394.75C1071.15 388.36 1072.98 385.90 1075.60 385.90Z"/></g><rect x="1081.2" y="389.9" width="9" height="8" fill="#3391df"/><rect x="1082" y="390.79999999999995" width="6.1" height="5.4" fill="#fff"/></svg>
<span class="t" style="left:1103px;top:381px;font-size:14px;line-height:14px;transform:translateX(0.82px) scaleX(1.0279);color:#fff;">No-show</span>
<div class="a" style="left:1059px;top:409.9px;width:40px;height:40px;border:2px solid rgba(255,255,255,0.74);border-radius:50%"></div>
<svg class="a" style="left:1060px;top:411px" width="38" height="38" viewBox="1060 411 38 38"><text x="1079.1" y="436.0" style="font-family:'Liberation Sans',sans-serif;font-weight:bold;font-size:21px" text-anchor="middle" fill="#fff" stroke="#fff" stroke-width="0.5">@</text></svg>
<span class="t" style="left:1103px;top:424px;font-size:14px;line-height:14px;transform:translateX(0.94px) scaleX(0.9505);color:#fff;">Enviar Email</span>
<div class="a" style="left:1059px;top:452.9px;width:40px;height:40px;border:2px solid rgba(255,255,255,0.74);border-radius:50%"></div>
<svg class="a" style="left:1060px;top:454px" width="38" height="38" viewBox="1060 454 38 38"><circle cx="1079.05" cy="472.95" r="8.8" fill="none" stroke="#fff" stroke-width="2.6"/><path d="M1072.9 466.79999999999995L1085.2 479.09999999999997" stroke="#fff" stroke-width="2.6" fill="none"/></svg>
<span class="t" style="left:1104px;top:467px;font-size:14px;line-height:14px;transform:translateX(0.32px) scaleX(0.9408);color:#fff;">Cancelar</span>
<div class="a" style="left:1059px;top:495.9px;width:40px;height:40px;border:2px solid rgba(255,255,255,0.74);border-radius:50%"></div>
<svg class="a" style="left:1060px;top:497px" width="38" height="38" viewBox="1060 497 38 38"><path d="M1079.2 511.29999999999995H1069.8V525.0H1088.3V511.29999999999995H1084.6" fill="none" stroke="#fff" stroke-width="1.9" stroke-linejoin="round"/><path d="M1085.2 505.9L1086.9 506.9L1076.6 520.5L1074 522.1999999999999L1075 519.4Z" fill="#fff" stroke="#fff" stroke-width="0.5" stroke-linejoin="round"/></svg>
<span class="t" style="left:1103px;top:510px;font-size:14px;line-height:14px;transform:translateX(0.91px);color:#fff;">Registro Hotelero</span>
<div class="a" style="left:1059px;top:541.0px;width:40px;height:40px;border:2px solid rgba(255,255,255,0.74);border-radius:50%"></div>
<svg class="a" style="left:1060px;top:542px" width="38" height="38" viewBox="1060 542 38 38"><rect x="1074" y="551.9" width="10.1" height="5" fill="none" stroke="#fff" stroke-width="1.8"/><rect x="1069.8" y="556.9" width="18.5" height="10" fill="none" stroke="#fff" stroke-width="1.8"/><rect x="1074" y="561.5" width="10.1" height="8" fill="none" stroke="#fff" stroke-width="1.8"/></svg>
<span class="t" style="left:1103px;top:555px;font-size:14px;line-height:14px;transform:translateX(0.70px) scaleX(1.0532);color:#fff;">Imprimir</span>
</div></body></html>
